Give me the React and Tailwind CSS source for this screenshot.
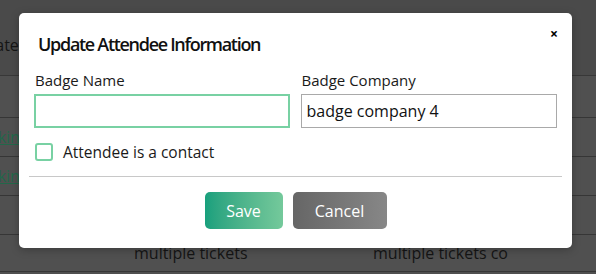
import { useState } from "react";

const rows = [
  { left: "", a: "", b: "", h: "h-[42px]" },
  { left: "kin", a: "", b: "", h: "h-[39px]" },
  { left: "kin", a: "", b: "", h: "h-[39px]" },
  { left: "", a: "", b: "", h: "h-[39px]" },
  { left: "", a: "multiple tickets", b: "multiple tickets co", h: "h-[37px]" },
];

function App() {
  const [badgeName, setBadgeName] = useState("");
  const [badgeCompany, setBadgeCompany] = useState("badge company 4");
  const [isContact, setIsContact] = useState(false);

  return (
    <div
      className="relative w-[596px] h-[274px] overflow-hidden bg-[#4f4f4f] text-[#1a1a1a]"
      style={{ fontFamily: '"Open Sans", "Liberation Sans", sans-serif' }}
    >
      {/* Page behind the overlay */}
      <div className="flex flex-col">
        <div className="h-[76px] bg-[#4a4a4a] border-b border-[#383838] flex items-center">
          <span className="text-[16px] text-[#151515] -ml-[36px] pt-[14px]">Update</span>
        </div>
        {rows.map((row, i) => (
          <div
            key={i}
            className={`${row.h} bg-[#505050] border-b border-[#363636] flex items-center text-[16px] text-[#151515]`}
          >
            <span className="w-[144px] -ml-[10px] underline text-[#22684a]">{row.left ? "ckin" : ""}</span>
            <span className="w-[239px]">{row.a}</span>
            <span>{row.b}</span>
          </div>
        ))}
      </div>

      {/* Modal */}
      <div className="absolute left-[19px] top-[13px] w-[553px] h-[235px] bg-white rounded-[5px] shadow-[0_2px_8px_rgba(0,0,0,0.25)] px-[15px]">
        <button className="absolute right-[14px] top-[14px] text-[14px] font-bold leading-none text-black">×</button>
        <h2 className="pl-[4px] pt-[19px] text-[18px] font-semibold tracking-[-1.3px] leading-[24px] text-[#111]">
          Update Attendee Information
        </h2>

        <div className="mt-[14px] grid grid-cols-2 gap-[10px]">
          <div className="flex flex-col">
            <label className="text-[15px] leading-[20px] pl-[1px] mb-[4px]">Badge Name</label>
            <input
              value={badgeName}
              onChange={(e) => setBadgeName(e.target.value)}
              className="h-[34px] w-[256px] border-2 border-[#78d1a3] px-[4px] text-[16px] outline-none"
            />
          </div>
          <div className="flex flex-col">
            <label className="text-[15px] leading-[20px] pl-[1px] mb-[4px]">Badge Company</label>
            <input
              value={badgeCompany}
              onChange={(e) => setBadgeCompany(e.target.value)}
              className="h-[34px] w-[256px] border border-[#a9a9a9] px-[5px] text-[16px] text-[#111] outline-none"
            />
          </div>
        </div>

        <label className="mt-[14px] flex items-center gap-[10px] pl-[1px] cursor-pointer">
          <span
            onClick={() => setIsContact(!isContact)}
            className="w-[18px] h-[18px] rounded-[3px] border-2 border-[#78d1a3] bg-white"
          />
          <span className="text-[15.5px] leading-[20px]">Attendee is a contact</span>
        </label>

        <div className="mt-[14px] mx-[-5px] border-t border-[#c8c8c8]" />

        <div className="mt-[15px] flex justify-center gap-[10px]">
          <button className="w-[78px] h-[37px] rounded-[5px] bg-gradient-to-r from-[#17a07d] to-[#74c99b] text-white text-[16px]">
            Save
          </button>
          <button className="w-[94px] h-[37px] rounded-[5px] bg-gradient-to-r from-[#666666] to-[#878787] text-white text-[16px]">
            Cancel
          </button>
        </div>
      </div>
    </div>
  );
}

export default App;
